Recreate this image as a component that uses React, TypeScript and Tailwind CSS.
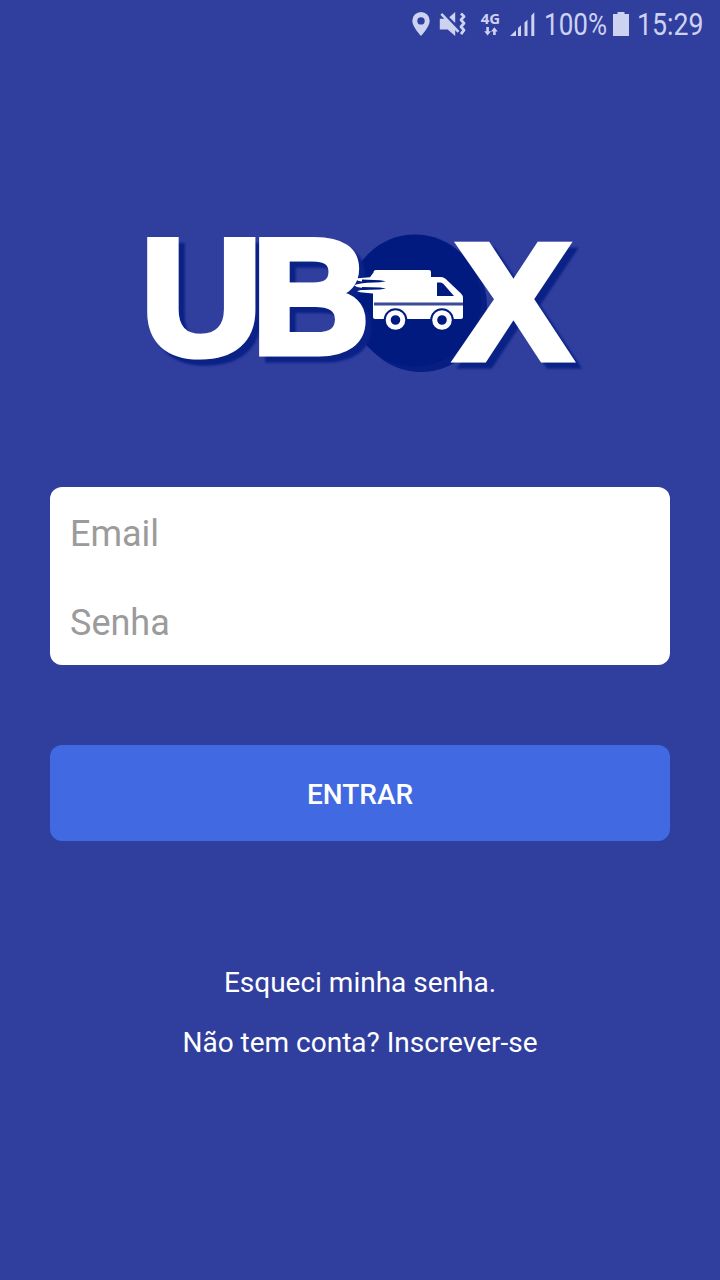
import { useState } from "react";

const inputClass =
  "block h-[89px] w-full bg-transparent pt-1 pl-5 text-4xl font-normal text-gray-700 placeholder-[#9b9b9b] outline-none";

function StatusBar() {
  return (
    <header className="flex h-12 items-center pl-[411px] text-[#cdd2f0]">
      {/* Location */}
      <svg className="mr-2 h-6 w-5 shrink-0" viewBox="0 0 20 24" fill="currentColor">
        <path
          fillRule="evenodd"
          d="M10 0a8.7 8.7 0 0 0-8.7 8.8C1.3 15 10 24 10 24s8.700-9 8.700-15.200A8.700 8.700 0 0 0 10 0Zm0 5.200a3.700 3.700 0 1 1 0 7.400 3.700 3.700 0 0 1 0-7.400Z"
        />
      </svg>
      {/* Vibrate */}
      <svg className="mr-[14px] h-6 w-7 shrink-0" viewBox="0 0 28 24" fill="none">
        <path d="M.8 6.800h6.400l9 9V24l-7.500-6.600H.8V6.800Z" fill="currentColor" />
        <path d="M10.300 5.300 16.200 0v11L10.300 5.300Z" fill="currentColor" />
        <path d="M2.300 1.800 19.500 19.800" stroke="currentColor" strokeWidth="2.600" />
        <path
          d="m22 1.500 3 3-3 3.400 3 3.400-3 3.400 3 3.400-3 4"
          stroke="currentColor"
          strokeWidth="2.800"
          strokeLinejoin="round"
        />
      </svg>
      {/* Mobile network */}
      <div className="mr-2 flex w-[19px] shrink-0 flex-col items-center">
        <span className="h-[13px] font-['Open_Sans'] text-[15px] leading-[13px] font-bold">4G</span>
        <svg className="mt-0.5 h-[9px] w-[14px]" viewBox="0 0 14 9" fill="currentColor">
          <path d="M2.300 0h2.600v4.300H7L3.600 8.500.2 4.300h2.100V0ZM9.100 8V4.400H7L10.400.2l3.400 4.200h-2.100V8H9.100Z" />
        </svg>
      </div>
      {/* Signal */}
      <svg className="mr-2 ml-0.5 h-6 w-[26px] shrink-0" viewBox="0 0 26 24" fill="currentColor">
        <path d="M0 24 6 18.200V24ZM8 16l3-2.800V24H8V16ZM14.500 10.500l3-2.800V24h-3V10.500ZM21.300 3.500l3-3.300V24h-3V3.500Z" />
      </svg>
      <span className="w-[69px] shrink-0 origin-left scale-x-[0.84] text-[31px] leading-none">
        100%
      </span>
      {/* Battery */}
      <svg className="mr-2 h-6 w-4 shrink-0" viewBox="0 0 16 24" fill="currentColor">
        <path d="M4.500 0h7v2H16v22H0V2h4.500V0Z" />
      </svg>
      <span className="w-[66px] shrink-0 origin-left scale-x-[0.86] text-[31px] leading-none">
        15:29
      </span>
    </header>
  );
}

function Logo() {
  return (
    <svg
      className="h-[245px] w-[460px] font-['Liberation_Sans',sans-serif] text-[163px] font-bold"
      viewBox="135 180 460 245"
      role="img"
      aria-label="UBOX"
    >
      <circle cx="421" cy="306" r="66" fill="#071f83" />
      <circle cx="415" cy="300.500" r="66" fill="#001a80" />
      {/* Letters */}
      <g
        fill="#fff"
        stroke="#fff"
        strokeWidth="7"
        strokeLinejoin="miter"
        className="drop-shadow-[6px_6px_1px_#0a2186]"
      >
        <text transform="translate(140.700 354.300) scale(1.03 1.012)">U</text>
        <text transform="translate(251.8 352.5)">B</text>
        <text transform="translate(456 358.500) scale(1.055 1.015)">X</text>
      </g>
      {/* Van */}
      <path
        d="M373.500 272.500q0-2.500 2.500-2.500H429q2 0 2 2v5h10q2.500 0 4.500 1.800l15.500 14.700q2 2 2 4.500V317q0 2-2 2h-86q-2 0-2-2v-23.500l-13-1.300-3-1 3-1 9-1.200-12-2-3-1.800 3-1 10-1.700-9-1.800-3-1.700 3-.8 12-1Z"
        fill="#fff"
      />
      <path d="M437 282.500h3.500q1.500 0 3 1.500l10.500 12H437V282.500Z" fill="#001a80" />
      <path d="M362 279.600l18 .6 6 1-6 1-18 .8ZM362 287l18 .6 6 1-6 1-18 .4Z" fill="#001a80" />
      <path d="M374 304h89" stroke="#3a4b98" strokeWidth="2.800" />
      {[395.500, 442].map((cx) => (
        <g key={cx}>
          <circle cx={cx} cy="320" r="11.800" fill="#001a80" />
          <circle cx={cx} cy="320" r="7.300" fill="none" stroke="#fff" strokeWidth="5" />
        </g>
      ))}
    </svg>
  );
}

export default function App() {
  const [email, setEmail] = useState("");
  const [password, setPassword] = useState("");

  return (
    <div className="flex h-[1280px] w-[720px] flex-col overflow-hidden bg-[#303e9e] font-['Roboto',sans-serif]">
      <StatusBar />

      <div className="mt-[132px] pl-[135px]">
        <Logo />
      </div>

      <form className="mt-[62px] px-[50px]" onSubmit={(e) => e.preventDefault()}>
        <div className="h-[178px] rounded-xl bg-white">
          <input
            type="email"
            placeholder="Email"
            value={email}
            onChange={(e) => setEmail(e.target.value)}
            className={inputClass}
          />
          <input
            type="password"
            placeholder="Senha"
            value={password}
            onChange={(e) => setPassword(e.target.value)}
            className={inputClass}
          />
        </div>
        <button
          type="submit"
          className="mt-20 block h-24 w-full rounded-xl bg-[#4169e1] pt-1 text-[28px] font-medium text-white"
        >
          ENTRAR
        </button>
      </form>

      {/* Links */}
      <nav className="mt-[112px] flex flex-col items-center text-[28px] leading-[60px] text-white">
        <a href="#">Esqueci minha senha.</a>
        <a href="#">Não tem conta? Inscrever-se</a>
      </nav>
    </div>
  );
}
